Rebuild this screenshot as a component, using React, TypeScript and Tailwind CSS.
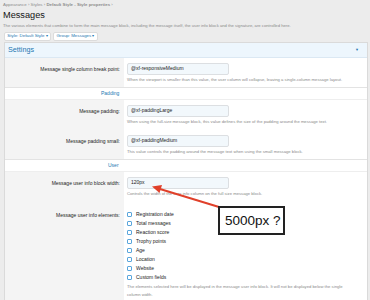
import React from "react";

const Input = ({ value }: { value: string }) => (
  <div className="h-[12px] w-[102px] bg-[#f2f8fc] border border-[#dcdfe2] rounded-[2px] px-[3px] flex items-center text-[5px] text-[#222]">
    {value}
  </div>
);

const Hint = ({ children }: { children: React.ReactNode }) => (
  <div className="text-[4.2px] leading-[8px] text-[#8a8a8a] mt-[1px]">{children}</div>
);

const Row = ({
  label,
  h,
  children,
  border = true,
}: {
  label: string;
  h: string;
  children: React.ReactNode;
  border?: boolean;
}) => (
  <div className={`flex ${h} ${border ? "border-b border-[#e3e3e3]" : ""}`}>
    <div className="w-[119px] shrink-0 bg-[#f4f4f4] pt-[5px] pr-[4px] text-right text-[5px] leading-[12px] text-[#222]">
      {label}
    </div>
    <div className="flex-1 bg-white pt-[5px] pl-[3px] pr-[8px]">{children}</div>
  </div>
);

const Check = ({ label }: { label: string }) => (
  <div className="flex items-center h-[9px]">
    <span className="w-[5px] h-[5px] border border-[#5aa6dc] bg-white rounded-[1px] mr-[4px]" />
    <span className="text-[5px] text-[#222]">{label}</span>
  </div>
);

export default function App() {
  return (
    <div className="relative w-[370px] h-[300px] overflow-hidden bg-[#ececec] font-['Liberation_Sans',Arial,sans-serif]">
      <div className="pl-[3px] pt-[3px] h-[8px] text-[4.4px] leading-[4px] text-[#8c8c8c]">
        Appearance › Styles › <span className="font-bold">Default Style - Style properties</span> ›
      </div>
      <div className="pl-[3px] text-[9.2px] leading-[14px] text-[#141414]">Messages</div>
      <div className="pl-[3px] text-[4.2px] leading-[8px] text-[#8a8a8a]">
        The various elements that combine to form the main message block, including the message itself, the user info
        block and the signature, are controlled here.
      </div>
      <div className="flex gap-[2px] pl-[4px] mt-[2px]">
        <div className="h-[9px] w-[47px] bg-white border border-[#dcdcdc] rounded-[2px] flex items-center justify-center text-[4.4px] text-[#2577b1]">
          Style: Default Style ▾
        </div>
        <div className="h-[9px] w-[45px] bg-white border border-[#dcdcdc] rounded-[2px] flex items-center justify-center text-[4.4px] text-[#2577b1]">
          Group: Messages ▾
        </div>
      </div>
      <div className="ml-[4px] w-[364px] mt-[1px] border border-[#dadada] bg-white">
        <div className="h-[15px] bg-[#edf6fd] flex items-center justify-between pl-[3px] pr-[8px] border-b border-[#dbe8f3]">
          <span className="text-[7.2px] text-[#2577b1]">Settings</span>
          <span className="text-[4px] text-[#2577b1]">▼</span>
        </div>
        <Row label="Message single column break point:" h="h-[30px]">
          <Input value="@xf-responsiveMedium" />
          <Hint>
            When the viewport is smaller than this value, the user column will collapse, leaving a single-column
            message layout.
          </Hint>
        </Row>
        <div className="h-[12px] bg-white border-b border-[#eeeeee] flex items-center pl-[96px] text-[5px] text-[#2577b1]">
          Padding
        </div>
        <Row label="Message padding:" h="h-[30px]" border={false}>
          <Input value="@xf-paddingLarge" />
          <Hint>
            When using the full-size message block, this value defines the size of the padding around the message text.
          </Hint>
        </Row>
        <Row label="Message padding small:" h="h-[30px]">
          <Input value="@xf-paddingMedium" />
          <Hint>This value controls the padding around the message text when using the small message block.</Hint>
        </Row>
        <div className="h-[12px] bg-white border-b border-[#eeeeee] flex items-center pl-[103px] text-[5px] text-[#2577b1]">
          User
        </div>
        <Row label="Message user info block width:" h="h-[32px]" border={false}>
          <Input value="120px" />
          <Hint>Controls the width of the user info column on the full size message block.</Hint>
        </Row>
        <Row label="Message user info elements:" h="h-[96px]" border={false}>
          <div className="pt-[1px]">
            <Check label="Registration date" />
            <Check label="Total messages" />
            <Check label="Reaction score" />
            <Check label="Trophy points" />
            <Check label="Age" />
            <Check label="Location" />
            <Check label="Website" />
            <Check label="Custom fields" />
          </div>
          <div className="text-[4.2px] leading-[8px] text-[#8a8a8a] mt-[1px] pr-[4px]">
            The elements selected here will be displayed in the message user info block. It will not be displayed below
            the single column width.
          </div>
        </Row>
      </div>

      <svg className="absolute left-0 top-0" width="370" height="300" viewBox="0 0 370 300">
        <line x1="219" y1="207" x2="160" y2="189" stroke="#e0402a" strokeWidth="2" />
        <polygon points="152,186.5 162,185 159.5,193" fill="#e0402a" />
      </svg>
      <div className="absolute left-[218px] top-[206px] w-[67px] h-[29px] border-2 border-[#222] bg-white flex items-center pl-[5px] whitespace-nowrap text-[13.5px] leading-none text-[#111]">
        5000px ?
      </div>
    </div>
  );
}
